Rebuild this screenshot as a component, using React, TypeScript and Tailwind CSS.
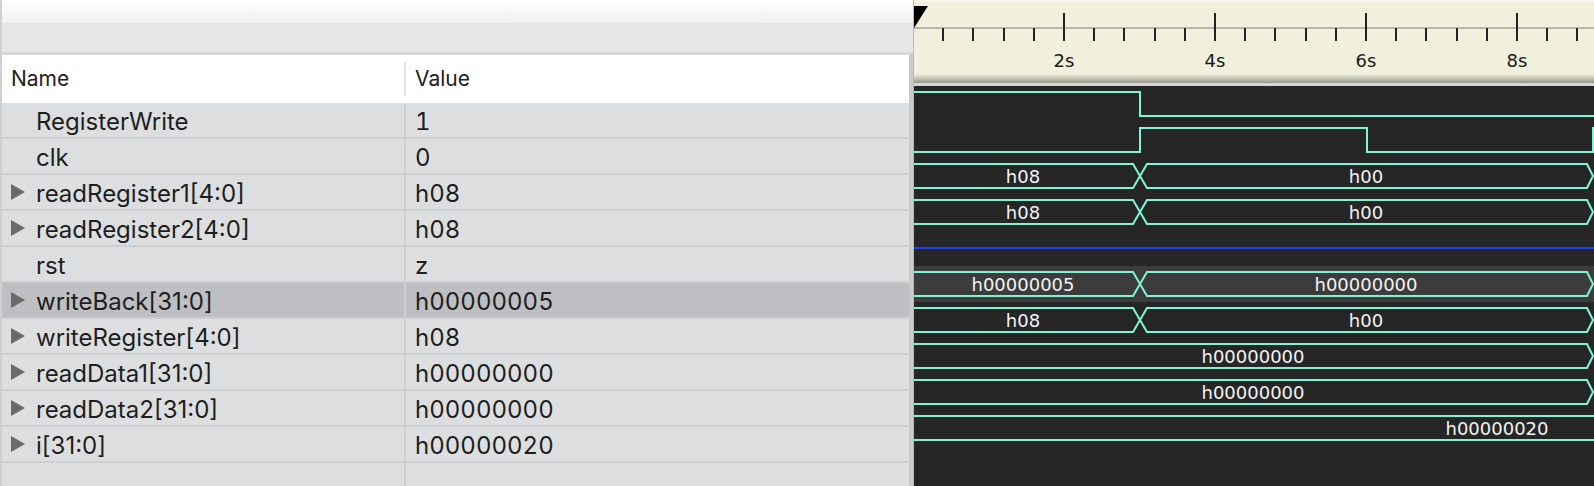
import React from "react";

type Sig = {
  name: string;
  value: string;
  expand: boolean;
  selected?: boolean;
};

const signals: Sig[] = [
  { name: "RegisterWrite", value: "1", expand: false },
  { name: "clk", value: "0", expand: false },
  { name: "readRegister1[4:0]", value: "h08", expand: true },
  { name: "readRegister2[4:0]", value: "h08", expand: true },
  { name: "rst", value: "z", expand: false },
  { name: "writeBack[31:0]", value: "h00000005", expand: true, selected: true },
  { name: "writeRegister[4:0]", value: "h08", expand: true },
  { name: "readData1[31:0]", value: "h00000000", expand: true },
  { name: "readData2[31:0]", value: "h00000000", expand: true },
  { name: "i[31:0]", value: "h00000020", expand: true },
];

const WAVE = "#7ff5d6";
const T = 226; // 3s
const E = 679; // right edge of the view
const PX = 75.5; // pixels per second

function Caret() {
  return (
    <svg width="15" height="16" viewBox="0 0 15 16">
      <polygon points="0,0 14,8 0,16" fill="#6b6b6b" />
    </svg>
  );
}

function SignalTable() {
  return (
    <div className="flex-1 flex flex-col border-r-4 border-[#c9c9c9] min-h-0">
      <div className="h-[48px] bg-white flex items-center text-[21px] text-[#222]">
        <div className="w-[402px] pl-[9px]">Name</div>
        <div className="w-[2px] h-[34px] bg-[#e2e2e2]" />
        <div className="pl-[9px]">Value</div>
      </div>
      {signals.map((s) => (
        <div
          key={s.name}
          className={
            "h-[36px] flex border-b-2 border-[#cdced0] text-[24px] leading-none text-[#1e1e1e] " +
            (s.selected ? "bg-[#bebfc2]" : "bg-[#dddee0]")
          }
        >
          <div className="w-[402px] pl-[9px] flex items-center">
            <div className="w-[16px] flex items-center">{s.expand && <Caret />}</div>
            <span className="ml-[9px] pt-[3px]">{s.name}</span>
          </div>
          <div className="w-[2px] bg-[#cdced0]" />
          <div className="pl-[9px] pt-[3px] flex items-center tabular-nums">{s.value}</div>
        </div>
      ))}
      <div className="flex-1 flex bg-[#dddee0]">
        <div className="w-[402px]" />
        <div className="w-[2px] bg-[#cdced0]" />
      </div>
    </div>
  );
}

function Ruler() {
  const ticks = [];
  for (let k = 1; k <= 22; k++) {
    const x = Math.round(k * PX * 0.4) - 1;
    const major = k % 5 === 0;
    ticks.push(
      <rect key={k} x={x - 1} y={major ? 13 : 28} width={2} height={major ? 28 : 13} fill="#222" />
    );
  }
  return (
    <svg width="680" height="86" className="block">
      <defs>
        <linearGradient id="rulerShade" x1="0" y1="0" x2="0" y2="1">
          <stop offset="0" stopColor="#f0f0dc" />
          <stop offset="1" stopColor="#98988a" />
        </linearGradient>
      </defs>
      <rect x="0" y="0" width="680" height="86" fill="#f0f0dc" />
      <rect x="0" y="0" width="680" height="2" fill="#f6f6ea" />
      <rect x="0" y="74" width="680" height="9" fill="url(#rulerShade)" />
      <rect x="0" y="83" width="680" height="3" fill="#d6d6d6" />
      <rect x="0" y="27" width="680" height="2" fill="#b6b6ac" />
      {ticks}
      {[2, 4, 6, 8].map((t) => (
        <text
          key={t}
          x={Math.round(t * PX) - 1}
          y="60"
          textAnchor="middle"
          dominantBaseline="central"
          fontFamily="'DejaVu Sans', sans-serif"
          fontSize="18"
          fill="#1a1a1a"
        >
          {t}s
        </text>
      ))}
      <polygon points="0,6 14,6 0,28" fill="#000" />
    </svg>
  );
}

function busSplit(top: number) {
  const yt = top + 6;
  const yb = top + 30;
  const ym = top + 18;
  return `M0,${yt} H${T - 7} L${T + 7},${yb} H${E - 6} L${E},${ym} L${E - 6},${yt} H${T + 7} L${T - 7},${yb} H0`;
}

function busFull(top: number) {
  const yt = top + 6;
  const yb = top + 30;
  const ym = top + 18;
  return `M0,${yt} H${E - 6} L${E},${ym} L${E - 6},${yb} H0`;
}

function Label({ x, top, text }: { x: number; top: number; text: string }) {
  return (
    <text
      x={x}
      y={top + 18}
      textAnchor="middle"
      dominantBaseline="central"
      fontFamily="'DejaVu Sans', sans-serif"
      fontSize="18"
      fill="#f2f2f2"
    >
      {text}
    </text>
  );
}

function Waves() {
  const r = (i: number) => i * 36;
  return (
    <svg width="680" height="400" className="block">
      <rect x="0" y="0" width="680" height="400" fill="#262626" />
      <rect x="0" y={r(5)} width="680" height="36" fill="#3c3c3c" />
      <g fill="none" stroke={WAVE} strokeWidth="2">
        <path d={`M0,6 H${T} V30 H680`} />
        <path d={`M0,66 H${T} V42 H453 V66 H${E} V42 H680`} />
        <path d={busSplit(r(2))} />
        <path d={busSplit(r(3))} />
        <path d={busSplit(r(5))} />
        <path d={busSplit(r(6))} />
        <path d={busFull(r(7))} />
        <path d={busFull(r(8))} />
        <path d={`M0,${r(9) + 6} H680 M0,${r(9) + 30} H680`} />
      </g>
      <line x1="0" y1={r(4) + 18} x2="680" y2={r(4) + 18} stroke="#1f40f0" strokeWidth="2" />
      <Label x={109} top={r(2)} text="h08" />
      <Label x={452} top={r(2)} text="h00" />
      <Label x={109} top={r(3)} text="h08" />
      <Label x={452} top={r(3)} text="h00" />
      <Label x={109} top={r(5)} text="h00000005" />
      <Label x={452} top={r(5)} text="h00000000" />
      <Label x={109} top={r(6)} text="h08" />
      <Label x={452} top={r(6)} text="h00" />
      <Label x={339} top={r(7)} text="h00000000" />
      <Label x={339} top={r(8)} text="h00000000" />
      <Label x={583} top={r(9)} text="h00000020" />
    </svg>
  );
}

export default function App() {
  return (
    <div
      className="flex w-[1594px] h-[486px] overflow-hidden bg-white"
      style={{ fontFamily: "Inter, 'Noto Sans', sans-serif" }}
    >
      <div className="w-[913px] flex flex-col border-l-2 border-[#d0d0d0]">
        <div className="h-[23px] bg-linear-to-b from-white to-[#efefef]" />
        <div className="h-[29px] bg-[#e6e6e6]" />
        <div className="h-[3px] bg-[#d6d6d6]" />
        <SignalTable />
      </div>
      <div className="flex-1 flex flex-col border-l border-[#4fe6e6]">
        <Ruler />
        <Waves />
      </div>
    </div>
  );
}
